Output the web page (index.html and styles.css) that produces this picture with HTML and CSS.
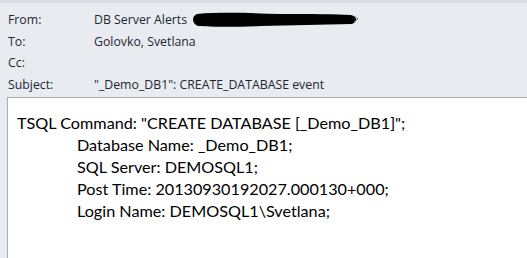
FILE: index.html
```html
<!DOCTYPE html>
<html>
<head>
<meta charset="utf-8">
<link rel="stylesheet" href="styles.css">
</head>
<body>
<div class="window">
  <div class="header">
    <div class="row"><span class="label">From:</span><span class="value">DB Server Alerts <span class="redact"><svg width="172" height="18" viewBox="0 0 172 18"><path d="M6 3 C30 1 60 2 90 3 C120 3 145 3 160 4 C166 5 167 11 161 13 C130 14 100 14 70 15 C45 16 20 16 8 15 C1 14 0 5 6 3 Z" fill="#000"/><path d="M163 5 l4 3 l-4 3" fill="none" stroke="#6a7ea8" stroke-width="1"/></svg></span></span></div>
    <div class="row"><span class="label">To:</span><span class="value">Golovko, Svetlana</span></div>
    <div class="row"><span class="label">Cc:</span><span class="value"></span></div>
    <div class="row"><span class="label">Subject:</span><span class="value">"_Demo_DB1": CREATE_DATABASE event</span></div>
  </div>
  <div class="body">
    <div class="line">TSQL Command: "CREATE DATABASE [_Demo_DB1]";</div>
    <div class="line indent">Database Name: _Demo_DB1;</div>
    <div class="line indent">SQL Server: DEMOSQL1;</div>
    <div class="line indent">Post Time: 20130930192027.000130+000;</div>
    <div class="line indent">Login Name: DEMOSQL1\Svetlana;</div>
  </div>
</div>
</body>
</html>
```
FILE: styles.css
```css
html, body {
  margin: 0;
  padding: 0;
  width: 527px;
  height: 258px;
  overflow: hidden;
  background: #e8ebf0;
}
.window {
  display: flex;
  flex-direction: column;
  height: 258px;
  border-top: 3px solid #d9dde3;
  box-sizing: border-box;
}
.header {
  padding: 6px 0 0 8px;
  font-family: "Open Sans", "Noto Sans", sans-serif;
  font-size: 12.3px;
  color: #1e2633;
}
.row {
  display: flex;
  height: 21.5px;
  align-items: center;
}
.label {
  width: 86px;
}
.value {
  display: flex;
  align-items: center;
}
.redact {
  display: inline-flex;
  margin-left: 4px;
}
.body {
  flex: 1;
  margin: 2px 0 0 7px;
  background: #fff;
  border-top: 1px solid #a9adb3;
  border-left: 1px solid #a9adb3;
  padding: 14px 0 0 9px;
  font-family: "Lato", "Open Sans", sans-serif;
  font-size: 16.2px;
  color: #000;
}
.line {
  height: 22px;
  line-height: 22px;
}
.indent {
  padding-left: 60px;
}
```
